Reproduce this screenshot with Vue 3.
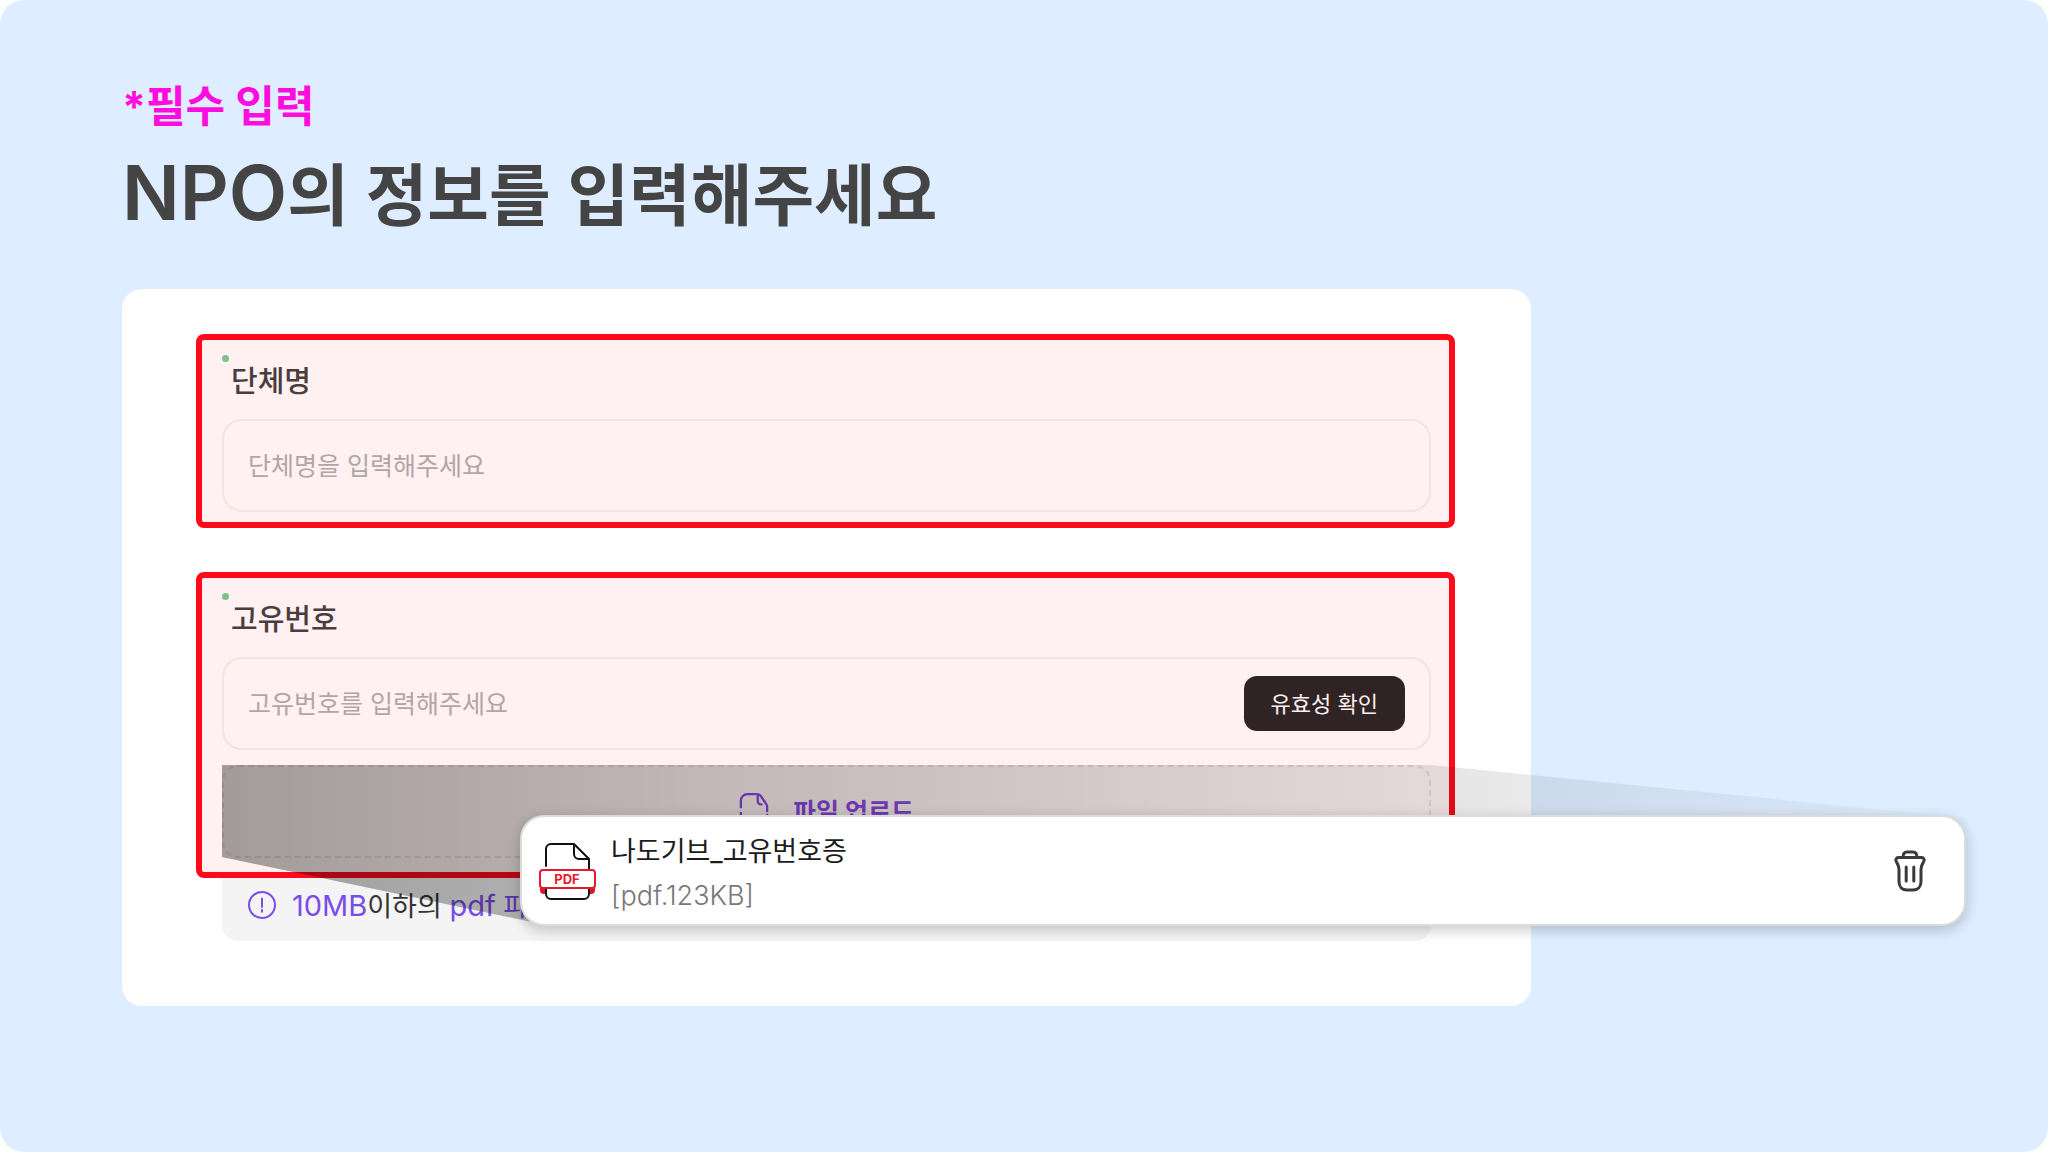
<template>
  <main class="page">
    <header class="page-head">
      <p class="eyebrow">*필수 입력</p>
      <h1 class="title"><span class="latin">NPO</span>의 정보를 입력해주세요</h1>
    </header>

    <form class="card" @submit.prevent>
      <section class="group">
        <div class="group-head">
          <span class="dot"></span>
          <label for="org-name">단체명</label>
        </div>
        <div class="field">
          <input id="org-name" v-model="orgName" type="text" placeholder="단체명을 입력해주세요" />
        </div>
      </section>

      <section class="group">
        <div class="group-head">
          <span class="dot"></span>
          <label for="org-code">고유번호</label>
        </div>
        <div class="field">
          <input id="org-code" v-model="orgCode" type="text" placeholder="고유번호를 입력해주세요" />
          <button class="check-btn" type="button">유효성 확인</button>
        </div>
        <label class="upload">
          <input class="upload-input" type="file" accept="application/pdf" @change="onFile" />
          <svg class="upload-icon" viewBox="0 0 32 38" aria-hidden="true">
            <path d="M2 16V9a7 7 0 0 1 7-7h10.500c1.500 0 2.500.500 3.500 1.800l5.500 8c1 1.300 1.500 2.500 1.500 4V20M20 3v6c0 2.500 1.500 4 4 4M2 22v7a7 7 0 0 0 7 7h14a7 7 0 0 0 7-7v-5" />
          </svg>
          <span>파일 업로드</span>
        </label>
      </section>

      <p class="notice">
        <svg class="notice-icon" viewBox="0 0 28 28" aria-hidden="true">
          <circle cx="14" cy="14" r="13" />
          <path d="M14 7.500v8.500M14 19v1.800" />
        </svg>
        <span><em>10MB</em>이하의 <em>pdf</em> <b>파일</b></span>
      </p>

      <!-- beam from the upload area to the enlarged file row -->
      <svg class="beam" viewBox="0 0 1744 157" preserveAspectRatio="none" aria-hidden="true">
        <defs>
          <linearGradient id="beam-fill" x1="0" y1="0" x2="1" y2="0">
            <stop offset="0" stop-color="#000" stop-opacity="0.36" />
            <stop offset="0.3" stop-color="#000" stop-opacity="0.23" />
            <stop offset="0.7" stop-color="#000" stop-opacity="0.1" />
            <stop offset="1" stop-color="#000" stop-opacity="0.01" />
          </linearGradient>
        </defs>
        <path d="M0 0H1209L1744 53V100L310 157L0 92Z" fill="url(#beam-fill)" />
      </svg>

      <div class="file-row">
        <svg class="pdf-icon" viewBox="0 0 57 58" aria-hidden="true">
          <path class="fold" d="M1 45h7v7H5a4 4 0 0 1-4-4zM56 45h-7v7h3a4 4 0 0 0 4-4z" />
          <path class="sheet" d="M7 24V7a5 5 0 0 1 5-5h23l15 15v11M35 2v10a5 5 0 0 0 5 5h10M7 46v6a5 5 0 0 0 5 5h33a5 5 0 0 0 5-5v-6" />
          <rect class="band" x="1" y="28" width="55" height="18" rx="3" />
          <text x="28" y="42" text-anchor="middle">PDF</text>
        </svg>
        <div class="file-text">
          <span class="file-name">{{ file.name }}</span>
          <span class="file-meta">[{{ file.type }}.{{ file.size }}]</span>
        </div>
        <button class="delete-btn" type="button" aria-label="삭제">
          <svg viewBox="0 0 32 42" aria-hidden="true">
            <path d="M9 7.500c0-3.500 1.500-5.500 4-5.500h6c2.500 0 4 2 4 5.500M4.500 7.500h23c2.500 0 3.300 2.500 2 4.500-1.500 2.500-2.500 4-2.500 7v12.500c0 5-3 8.500-8 8.500h-6c-5 0-8-3.500-8-8.500V19c0-3-1-4.500-2.500-7-1.300-2-.5-4.500 2-4.500zM12.200 17v14M19.800 17v14" />
          </svg>
        </button>
      </div>
    </form>
  </main>
</template>

<script setup>
import { ref } from 'vue'

const orgName = ref('')
const orgCode = ref('')
const file = ref({ name: '나도기브_고유번호증', type: 'pdf', size: '123KB' })

function onFile(e) {
  const picked = e.target.files[0]
  if (!picked) return
  file.value = {
    name: picked.name.replace(/\.pdf$/i, ''),
    type: 'pdf',
    size: `${Math.round(picked.size / 1024)}KB`,
  }
}
</script>

<style>
body {
  margin: 0;
  background: #fff;
}
</style>

<style scoped>
.page {
  box-sizing: border-box;
  min-height: 100vh;
  padding: 76px 122px 80px;
  border-radius: 24px;
  background: #deedff;
  font-family: Inter, "Noto Sans CJK KR", sans-serif;
  overflow: hidden;
}
.page *, .page *::before { box-sizing: border-box; }
.page input, .page button { font-family: inherit; }

.eyebrow {
  margin: 0;
  color: #ff0cdf;
  font-size: 43px;
  font-weight: 700;
  line-height: 60px;
}
.title {
  margin: 0;
  color: #444;
  font-size: 67px;
  font-weight: 600;
  line-height: 120px;
}
.title .latin {
  font-size: 76px;
  font-weight: 600;
  line-height: 1;
}

.card {
  position: relative;
  width: 100%;
  max-width: 1409px;
  margin-top: 33px;
  padding: 45px 76px 65px 74px;
  border-radius: 20px;
  background: #fff;
}

.group {
  padding: 0 18px 10px 20px;
  border: 6px solid #ff0a1a;
  border-radius: 8px;
  background: #fff1f1;
}
.group + .group {
  margin-top: 44px;
  padding-bottom: 14px;
}
.group-head {
  position: relative;
  display: flex;
  align-items: center;
  height: 79px;
  padding: 0 0 2px 9px;
  color: #4a3d3d;
  font-size: 29px;
  font-weight: 500;
}
.dot {
  position: absolute;
  top: 15px;
  left: 0;
  width: 7px;
  height: 7px;
  border-radius: 50%;
  background: #7fc08c;
}

.field {
  display: flex;
  align-items: center;
  height: 93px;
  padding: 0 24px;
  border: 2px solid #f3e3e3;
  border-radius: 20px;
}
.field input {
  flex: 1;
  min-width: 0;
  padding: 0;
  border: 0;
  outline: none;
  background: transparent;
  color: #4a3d3d;
  font-size: 25px;
}
.field input::placeholder { color: #b3a4a4; opacity: 1; }
.check-btn {
  height: 55px;
  padding: 0 27px 4px;
  border: 0;
  border-radius: 13px;
  background: #302323;
  color: #fff1f1;
  font-size: 22px;
}

.upload {
  display: flex;
  align-items: center;
  justify-content: center;
  gap: 24px;
  height: 93px;
  margin-top: 15px;
  padding-bottom: 4px;
  border: 2px dashed #eadada;
  border-radius: 16px;
  color: #8748de;
  font-size: 25px;
  font-weight: 700;
}
.upload-input {
  position: absolute;
  width: 1px;
  height: 1px;
  opacity: 0;
}
.upload-icon {
  width: 30px;
  height: 38px;
  fill: none;
  stroke: #8748de;
  stroke-width: 2.5;
  stroke-linecap: round;
}

.notice {
  display: flex;
  align-items: center;
  gap: 16px;
  height: 63px;
  margin: 0 24px 0 26px;
  padding: 0 26px 10px;
  border-radius: 0 0 16px 16px;
  background: #f4f4f4;
  color: #333;
  font-size: 27px;
}
.notice em {
  color: #7b4de8;
  font-size: 29px;
  font-style: normal;
}
.notice b { color: #7b4de8; font-weight: 400; }
.notice-icon {
  width: 28px;
  height: 28px;
  fill: none;
  stroke: #7b4de8;
  stroke-width: 2;
  stroke-linecap: round;
}

.beam {
  position: absolute;
  top: 476px;
  left: 100px;
  width: calc(100% + 335px);
  height: 157px;
  pointer-events: none;
}

.file-row {
  position: absolute;
  top: 526px;
  left: 398px;
  right: -435px;
  display: flex;
  align-items: center;
  height: 111px;
  padding: 0 38px 0 17px;
  border: 2px solid #dcdcdc;
  border-radius: 24px;
  background: #fff;
  box-shadow: 0 4px 14px rgba(0, 0, 0, 0.22);
}
.pdf-icon { width: 57px; height: 58px; }
.pdf-icon .sheet {
  fill: none;
  stroke: #111;
  stroke-width: 2;
  stroke-linecap: round;
  stroke-linejoin: round;
}
.pdf-icon .band { fill: #fff; stroke: #e8192c; stroke-width: 2; }
.pdf-icon .fold { fill: #d8192c; }
.pdf-icon text { fill: #e8192c; font-size: 13px; font-weight: 700; }

.file-text {
  display: flex;
  flex: 1;
  flex-direction: column;
  padding: 6px 0 0 15px;
  white-space: nowrap;
}
.file-name {
  color: #1c1c1c;
  font-size: 27px;
  line-height: 44px;
}
.file-meta {
  color: #777;
  font-size: 27px;
  font-weight: 300;
  line-height: 44px;
}
.delete-btn {
  padding: 0;
  border: 0;
  background: none;
}
.delete-btn svg {
  display: block;
  width: 32px;
  height: 42px;
  fill: none;
  stroke: #3a3a3a;
  stroke-width: 3;
  stroke-linecap: round;
  stroke-linejoin: round;
}
</style>
